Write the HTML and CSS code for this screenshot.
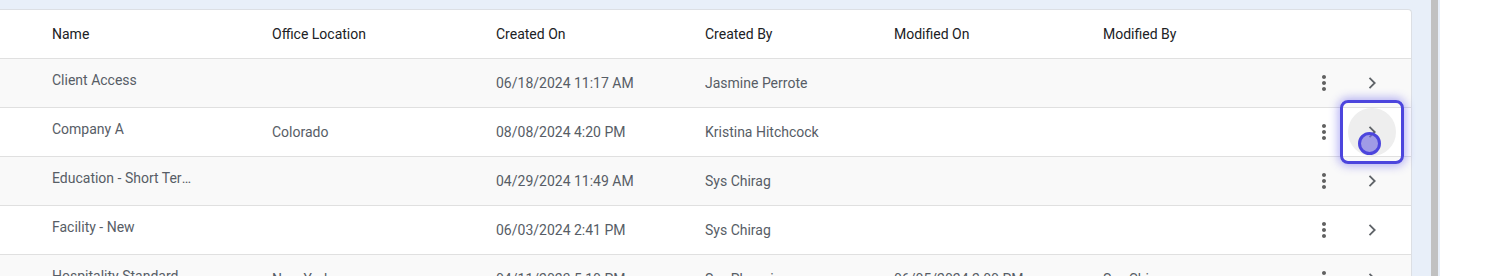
FILE: index.html
```html
<!DOCTYPE html>
<html lang="en">
<head>
  <meta charset="UTF-8">
  <meta name="viewport" content="width=device-width, initial-scale=1.0">
  <title>Templates</title>
  <link rel="stylesheet" href="styles.css">
</head>
<body>
  <div class="page">
    <main class="content">
      <div class="card">
        <!-- header -->
        <div class="row head">
          <div class="cell">Name</div>
          <div class="cell">Office Location</div>
          <div class="cell">Created On</div>
          <div class="cell">Created By</div>
          <div class="cell">Modified On</div>
          <div class="cell">Modified By</div>
          <div class="cell"></div>
          <div class="cell"></div>
        </div>

        <div class="row alt">
          <div class="cell name">Client Access</div>
          <div class="cell"></div>
          <div class="cell">06/18/2024 11:17 AM</div>
          <div class="cell">Jasmine Perrote</div>
          <div class="cell"></div>
          <div class="cell"></div>
          <div class="cell action"><button class="icon-btn kebab"><svg viewBox="0 0 24 24"><path d="M12 8c1.1 0 2-.9 2-2s-.9-2-2-2-2 .9-2 2 .9 2 2 2zm0 2c-1.1 0-2 .9-2 2s.9 2 2 2 2-.9 2-2-.9-2-2-2zm0 6c-1.1 0-2 .9-2 2s.9 2 2 2 2-.9 2-2-.9-2-2-2z"/></svg></button></div>
          <div class="cell action"><button class="icon-btn chevron"><svg viewBox="0 0 24 24"><path d="M9.5 6.8l5.2 5.2-5.2 5.2"/></svg></button></div>
        </div>

        <div class="row">
          <div class="cell name">Company A</div>
          <div class="cell">Colorado</div>
          <div class="cell">08/08/2024 4:20 PM</div>
          <div class="cell">Kristina Hitchcock</div>
          <div class="cell"></div>
          <div class="cell"></div>
          <div class="cell action"><button class="icon-btn kebab"><svg viewBox="0 0 24 24"><path d="M12 8c1.1 0 2-.9 2-2s-.9-2-2-2-2 .9-2 2 .9 2 2 2zm0 2c-1.1 0-2 .9-2 2s.9 2 2 2 2-.9 2-2-.9-2-2-2zm0 6c-1.1 0-2 .9-2 2s.9 2 2 2 2-.9 2-2-.9-2-2-2z"/></svg></button></div>
          <div class="cell action"><button class="icon-btn chevron focused"><svg viewBox="0 0 24 24"><path d="M9.5 6.8l5.2 5.2-5.2 5.2"/></svg><span class="cursor-dot"></span></button></div>
        </div>

        <div class="row alt">
          <div class="cell name">Education - Short Term Rental</div>
          <div class="cell"></div>
          <div class="cell">04/29/2024 11:49 AM</div>
          <div class="cell">Sys Chirag</div>
          <div class="cell"></div>
          <div class="cell"></div>
          <div class="cell action"><button class="icon-btn kebab"><svg viewBox="0 0 24 24"><path d="M12 8c1.1 0 2-.9 2-2s-.9-2-2-2-2 .9-2 2 .9 2 2 2zm0 2c-1.1 0-2 .9-2 2s.9 2 2 2 2-.9 2-2-.9-2-2-2zm0 6c-1.1 0-2 .9-2 2s.9 2 2 2 2-.9 2-2-.9-2-2-2z"/></svg></button></div>
          <div class="cell action"><button class="icon-btn chevron"><svg viewBox="0 0 24 24"><path d="M9.5 6.8l5.2 5.2-5.2 5.2"/></svg></button></div>
        </div>

        <div class="row">
          <div class="cell name">Facility - New</div>
          <div class="cell"></div>
          <div class="cell">06/03/2024 2:41 PM</div>
          <div class="cell">Sys Chirag</div>
          <div class="cell"></div>
          <div class="cell"></div>
          <div class="cell action"><button class="icon-btn kebab"><svg viewBox="0 0 24 24"><path d="M12 8c1.1 0 2-.9 2-2s-.9-2-2-2-2 .9-2 2 .9 2 2 2zm0 2c-1.1 0-2 .9-2 2s.9 2 2 2 2-.9 2-2-.9-2-2-2zm0 6c-1.1 0-2 .9-2 2s.9 2 2 2 2-.9 2-2-.9-2-2-2z"/></svg></button></div>
          <div class="cell action"><button class="icon-btn chevron"><svg viewBox="0 0 24 24"><path d="M9.5 6.8l5.2 5.2-5.2 5.2"/></svg></button></div>
        </div>

        <div class="row alt">
          <div class="cell name">Hospitality Standard</div>
          <div class="cell">New York</div>
          <div class="cell">04/11/2023 5:10 PM</div>
          <div class="cell">Sys Phoenix</div>
          <div class="cell">06/05/2024 2:00 PM</div>
          <div class="cell">Sys Chirag</div>
          <div class="cell action"><button class="icon-btn kebab"><svg viewBox="0 0 24 24"><path d="M12 8c1.1 0 2-.9 2-2s-.9-2-2-2-2 .9-2 2 .9 2 2 2zm0 2c-1.1 0-2 .9-2 2s.9 2 2 2 2-.9 2-2-.9-2-2-2zm0 6c-1.1 0-2 .9-2 2s.9 2 2 2 2-.9 2-2-.9-2-2-2z"/></svg></button></div>
          <div class="cell action"><button class="icon-btn chevron"><svg viewBox="0 0 24 24"><path d="M9.5 6.8l5.2 5.2-5.2 5.2"/></svg></button></div>
        </div>
      </div>
    </main>
    <div class="scrollbar"></div>
    <div class="edge"></div>
    <aside class="side"></aside>
  </div>
</body>
</html>
```

FILE: styles.css
```css
html, body {
  margin: 0;
  padding: 0;
  height: 100%;
  overflow: hidden;
}
body {
  font-family: 'Roboto', 'Liberation Sans', sans-serif;
  font-size: 14px;
  background-color: #ffffff;
}
.page {
  display: flex;
  height: 100vh;
}
.content {
  flex: 0 0 1431px;
  box-sizing: border-box;
  padding: 9px 19px 0 0;
  background-color: #e8eff9;
}
.card {
  background-color: #ffffff;
  border-top: 1px solid #dcdfe4;
  border-right: 1px solid #dcdfe4;
  border-top-right-radius: 4px;
}
.scrollbar {
  flex: 0 0 7px;
  background-color: #c1c1c1;
}
.edge {
  flex: 0 0 2px;
  background-color: #e8eff9;
}
.side {
  flex: 1;
  background-color: #ffffff;
}

/* table rows */
.row {
  display: grid;
  grid-template-columns: 220px 224px 209px 189px 209px 196px 49px 48px;
  align-items: center;
  box-sizing: border-box;
  height: 49px;
  padding-left: 52px;
  border-bottom: 1px solid #e0e0e0;
  color: #575d66;
}
.row.alt {
  background-color: #f9f9f9;
}
.row.head {
  color: #202124;
}
.cell {
  white-space: nowrap;
  overflow: hidden;
  text-overflow: ellipsis;
}
.cell.name {
  padding-right: 76px;
  padding-bottom: 6px;
}
.cell.action {
  overflow: visible;
  display: flex;
  justify-content: center;
}

/* icon buttons */
.icon-btn {
  position: relative;
  width: 48px;
  height: 48px;
  padding: 0;
  border: none;
  border-radius: 50%;
  background: transparent;
  display: flex;
  align-items: center;
  justify-content: center;
}
.icon-btn svg {
  width: 24px;
  height: 24px;
}
.kebab svg {
  fill: #616161;
}
.chevron svg {
  fill: none;
  stroke: #5f6368;
  stroke-width: 1.8;
}
.icon-btn.focused {
  background-color: #eeeeee;
}
.icon-btn.focused::before {
  content: "";
  position: absolute;
  inset: -8px;
  border: 3px solid #4c45dd;
  border-radius: 8px;
  box-shadow: 0 0 10px 2px rgba(92, 82, 232, 0.45);
}
.cursor-dot {
  position: absolute;
  left: 10px;
  top: 24px;
  width: 23px;
  height: 23px;
  box-sizing: border-box;
  border: 3px solid #4c45dd;
  border-radius: 50%;
  background-color: rgba(118, 110, 226, 0.65);
}
```
